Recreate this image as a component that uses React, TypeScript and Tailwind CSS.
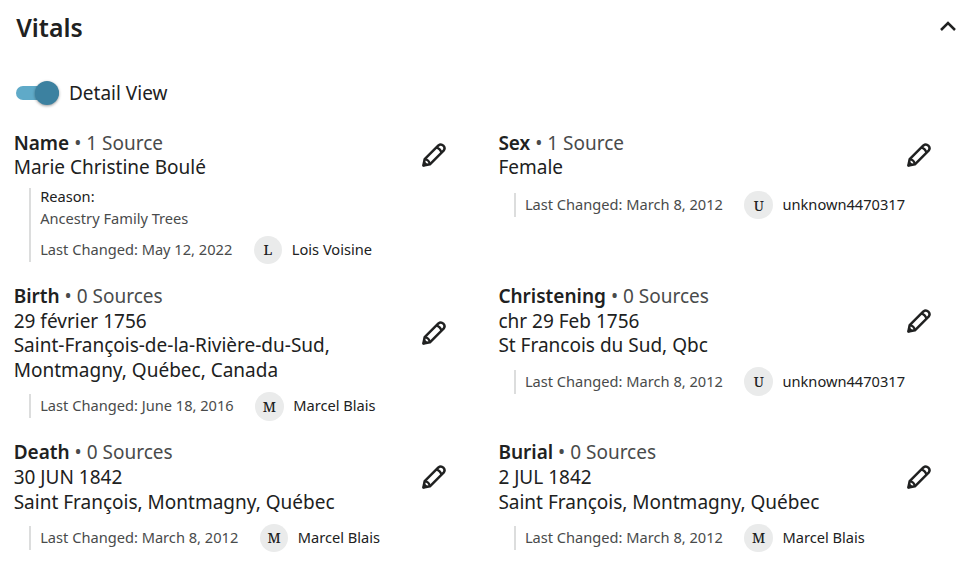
import { useState } from "react";
import clsx from "clsx";

type Vital = {
  label: string;
  sources: string;
  lines: string[];
  reason?: string;
  changed: string;
  user: string;
};

const vitals: Vital[] = [
  {
    label: "Name",
    sources: "1 Source",
    lines: ["Marie Christine Boulé"],
    reason: "Ancestry Family Trees",
    changed: "May 12, 2022",
    user: "Lois Voisine"
  },
  { label: "Sex", sources: "1 Source", lines: ["Female"], changed: "March 8, 2012", user: "unknown4470317" },
  {
    label: "Birth",
    sources: "0 Sources",
    lines: ["29 février 1756", "Saint-François-de-la-Rivière-du-Sud, Montmagny, Québec, Canada"],
    changed: "June 18, 2016",
    user: "Marcel Blais"
  },
  {
    label: "Christening",
    sources: "0 Sources",
    lines: ["chr 29 Feb 1756", "St Francois du Sud, Qbc"],
    changed: "March 8, 2012",
    user: "unknown4470317"
  },
  {
    label: "Death",
    sources: "0 Sources",
    lines: ["30 JUN 1842", "Saint François, Montmagny, Québec"],
    changed: "March 8, 2012",
    user: "Marcel Blais"
  },
  {
    label: "Burial",
    sources: "0 Sources",
    lines: ["2 JUL 1842", "Saint François, Montmagny, Québec"],
    changed: "March 8, 2012",
    user: "Marcel Blais"
  }
];

function PencilIcon() {
  return (
    <svg viewBox="0 0 26 26" className="h-[26px] w-[26px]" fill="none" stroke="currentColor" strokeWidth="2.5" strokeLinejoin="round">
      <path d="M2.4 23.6 3.7 17.1 17.4 3.4a3.7 3.7 0 0 1 5.2 5.2L8.9 22.3Z" />
      <path d="M15.3 5.6c2.5.6 4.5 2.6 5.1 5.1M3.9 17.1c2.5.5 4.5 2.6 5 5" strokeWidth="2.3" />
      <path d="m2.4 23.6.8-3.6 2.8 2.8Z" fill="currentColor" strokeWidth="1.6" />
    </svg>
  );
}

function VitalItem({ vital }: { vital: Vital }) {
  return (
    <div>
      <div className="flex min-h-[53px] items-center justify-between">
        <div className="w-[345px] text-[19px] leading-[24.7px]">
          <div>
            <span className="font-semibold">{vital.label}</span>
            <span className="text-[#494b4b]"> • {vital.sources}</span>
          </div>
          {vital.lines.map((line) => (
            <div key={line}>{line}</div>
          ))}
        </div>
        <button type="button" aria-label={`Edit ${vital.label}`}>
          <PencilIcon />
        </button>
      </div>

      <div
        className={clsx(
          "ml-[15.5px] border-l-2 border-[#dcdddd] pl-[9px] text-[14.63px]",
          vital.reason ? "mt-[6.2px]" : "mt-[11.4px]"
        )}
      >
        {vital.reason ? (
          <div className="mb-[9px]">
            <div className="leading-[17px]">Reason:</div>
            <div className="mt-[2px] leading-[22px] text-[#494b4b]">{vital.reason}</div>
          </div>
        ) : null}
        <div className="flex h-6 items-center whitespace-nowrap">
          <span className="text-[#494b4b]">Last Changed: {vital.changed}</span>
          <span className="ml-[21.5px] flex h-[28.5px] w-[28.5px] items-center justify-center rounded-full bg-[#eaebeb] font-['Noto_Serif','DejaVu_Serif',serif] text-[14px] font-medium">
            {vital.user[0].toUpperCase()}
          </span>
          <span className="ml-[9.5px]">{vital.user}</span>
        </div>
      </div>
    </div>
  );
}

export default function App() {
  const [detail, setDetail] = useState(true);
  const [open, setOpen] = useState(true);

  return (
    <main className="h-[562px] w-[960px] overflow-hidden bg-white font-['Noto_Sans',sans-serif] text-[#202121]">
      <header className="flex h-[54px] items-center justify-between pr-[3px] pl-[16.2px]">
        <h2 className="pt-px text-[24.8px] font-semibold">Vitals</h2>
        <button type="button" aria-label="Toggle vitals" className="pb-0.5" onClick={() => setOpen(!open)}>
          <svg viewBox="0 0 18 12" className="h-3 w-[18px]" fill="none" stroke="currentColor" strokeWidth="2.5">
            <path d="m2 10 7-7 7 7" />
          </svg>
        </button>
      </header>

      {open ? (
        <>
          <div className="mt-[27px] flex h-6 items-center pl-4">
            <button
              type="button"
              role="switch"
              aria-checked={detail}
              aria-label="Detail View"
              onClick={() => setDetail(!detail)}
              className="flex h-[14px] w-[43px] items-center justify-end rounded-full bg-[#5faac8]"
            >
              <span className="h-6 w-6 rounded-full bg-[#3c81a0] shadow-[0_1px_3px_rgba(0,0,0,0.4)]" />
            </button>
            <span className="ml-[10px] pt-px text-[19px]">Detail View</span>
          </div>

          <div className="mt-[23.8px] grid grid-cols-[433.3px_433.3px] gap-x-[51.4px] gap-y-[22.1px] pl-[13.7px]">
            {vitals.map((vital) => (
              <VitalItem key={vital.label} vital={vital} />
            ))}
          </div>
        </>
      ) : null}
    </main>
  );
}
